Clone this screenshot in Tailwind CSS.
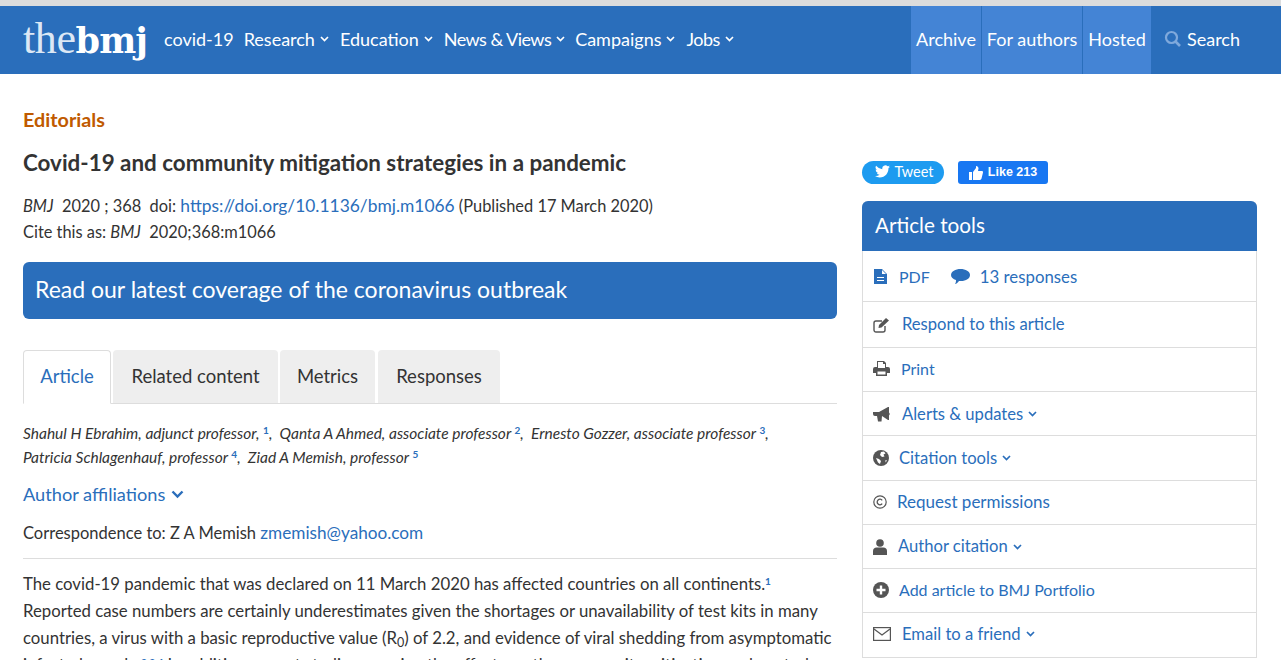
<!DOCTYPE html>
<html>
<head>
<meta charset="utf-8">
<script src="https://cdn.jsdelivr.net/npm/@tailwindcss/browser@4"></script>
</head>
<body class="bg-white h-[660px] overflow-hidden font-['Lato','Liberation_Sans',sans-serif] text-[#333]">
<div class="h-[6px] bg-[#dcdcdc]"></div>
<header class="h-[68px] bg-[#2a6ebb] flex items-center text-white text-[18px] pl-[23px]">
  <a class="w-[141px] h-[50px] leading-[50px] flex items-baseline -mt-[2px]"><span class="font-['Liberation_Serif',serif] text-[44px] tracking-[-0.4px] text-[#dce8f5]">the</span><span class="font-['DejaVu_Serif',serif] font-bold text-[35px] tracking-[-0.9px] text-white">bmj</span></a>
  <nav class="flex items-center -mt-[2px]">
    <a class="mr-[10px]">covid-19</a>
    <a class="mr-[11px] flex items-center gap-[5px]">Research <svg class="w-[9px] h-[6px]" viewBox="0 0 9 6"><path d="M1 1l3.500 3.500L8 1" fill="none" stroke="white" stroke-width="1.700"/></svg></a>
    <a class="mr-[11px] flex items-center gap-[5px]">Education <svg class="w-[9px] h-[6px]" viewBox="0 0 9 6"><path d="M1 1l3.500 3.500L8 1" fill="none" stroke="white" stroke-width="1.700"/></svg></a>
    <a class="mr-[10px] flex items-center gap-[5px] tracking-[-0.55px]">News &amp; Views <svg class="w-[9px] h-[6px]" viewBox="0 0 9 6"><path d="M1 1l3.500 3.500L8 1" fill="none" stroke="white" stroke-width="1.700"/></svg></a>
    <a class="mr-[11px] flex items-center gap-[5px]">Campaigns <svg class="w-[9px] h-[6px]" viewBox="0 0 9 6"><path d="M1 1l3.500 3.500L8 1" fill="none" stroke="white" stroke-width="1.700"/></svg></a>
    <a class="flex items-center gap-[5px] tracking-[-0.5px]">Jobs <svg class="w-[9px] h-[6px]" viewBox="0 0 9 6"><path d="M1 1l3.500 3.500L8 1" fill="none" stroke="white" stroke-width="1.700"/></svg></a>
  </nav>
  <div class="ml-auto flex items-center h-full">
    <a class="h-full w-[70px] bg-[#4484d5] flex items-center justify-center pb-[2px]">Archive</a>
    <a class="h-full w-[100px] ml-px bg-[#4484d5] flex items-center justify-center pb-[2px]">For authors</a>
    <a class="h-full w-[68px] ml-px bg-[#4484d5] flex items-center justify-center pb-[2px]">Hosted</a>
    <a class="h-full pl-[13px] w-[130px] flex items-center gap-[5px] pb-[2px]"><svg class="w-[18px] h-[18px]" viewBox="0 0 18 18"><circle cx="7.500" cy="7.500" r="5.500" fill="none" stroke="#7fa9dc" stroke-width="2.200"/><path d="M11.500 11.500L16 16" stroke="#7fa9dc" stroke-width="2.600"/></svg>Search</a>
  </div>
</header>
<main class="flex pl-[23px] pr-[24px]">
  <section class="w-[814px]">
    <div class="mt-[34px] text-[19.800px] leading-[22px] font-bold text-[#c05a00]">Editorials</div>
    <h1 class="mt-[20px] text-[22.400px] leading-[26px] font-bold text-[#333]">Covid-19 and community mitigation strategies in a pandemic</h1>
    <div class="mt-[17px] text-[16.400px] leading-[26px]">
      <p><i>BMJ</i>&nbsp; 2020 ; 368 &nbsp;doi: <a class="text-[#2a6ebb] text-[17.400px]">https://doi.org/10.1136/bmj.m1066</a> (Published 17 March 2020)</p>
      <p>Cite this as: <i>BMJ</i>&nbsp; 2020;368:m1066</p>
    </div>
    <a class="mt-[17px] flex items-center h-[57px] rounded-[6px] bg-[#2a6ebb] text-white text-[23px] pl-[12px] pb-[2px]">Read our latest coverage of the coronavirus outbreak</a>
    <div class="mt-[31px] flex items-end gap-[2px] h-[54px] border-b border-[#ddd] text-[18.500px]">
      <a class="h-[54px] w-[88px] flex items-center justify-center bg-white border border-[#ddd] border-b-white rounded-t-[4px] text-[#2a6ebb] -mb-px">Article</a>
      <a class="h-[53px] w-[165px] flex items-center justify-center bg-[#eee] rounded-t-[4px]">Related content</a>
      <a class="h-[53px] w-[95px] flex items-center justify-center bg-[#eee] rounded-t-[4px]">Metrics</a>
      <a class="h-[53px] w-[122px] ml-px flex items-center justify-center bg-[#eee] rounded-t-[4px]">Responses</a>
    </div>
    <div class="mt-[17px] text-[15.500px] leading-[24px] italic">
      <p>Shahul H Ebrahim, adjunct professor, <sup class="not-italic text-[#2a6ebb] text-[10px] font-bold">1</sup>,&nbsp; Qanta A Ahmed, associate professor <sup class="not-italic text-[#2a6ebb] text-[10px] font-bold">2</sup>,&nbsp; Ernesto Gozzer, associate professor <sup class="not-italic text-[#2a6ebb] text-[10px] font-bold">3</sup>,</p>
      <p>Patricia Schlagenhauf, professor <sup class="not-italic text-[#2a6ebb] text-[10px] font-bold">4</sup>,&nbsp; Ziad A Memish, professor <sup class="not-italic text-[#2a6ebb] text-[10px] font-bold">5</sup></p>
    </div>
    <a class="mt-[12px] flex items-center gap-[6px] text-[18.200px] leading-[26px] text-[#2a6ebb]">Author affiliations <svg class="w-[13px] h-[9px]" viewBox="0 0 13 9"><path d="M1.500 1.500l5 5 5-5" fill="none" stroke="#2a6ebb" stroke-width="2.400"/></svg></a>
    <p class="mt-[14px] text-[16.500px] leading-[24px] pb-[13px] border-b border-[#ddd]">Correspondence to: Z A Memish <a class="text-[#2a6ebb] text-[17.200px]">zmemish@yahoo.com</a></p>
    <div class="mt-[11px] text-[16.750px] leading-[27px]">
      <p>The covid-19 pandemic that was declared on 11 March 2020 has affected countries on all continents.<sup class="text-[#2a6ebb] text-[10px] font-bold">1</sup><br>Reported case numbers are certainly underestimates given the shortages or unavailability of test kits in many<br>countries, a virus with a basic reproductive value (R<sub>0</sub>) of 2.2, and evidence of viral shedding from asymptomatic<br>infected people.<sup class="text-[#2a6ebb] text-[10px] font-bold">2 3 4</sup> In addition, recent studies examine the effects on the community mitigation and control</p>
    </div>
  </section>
  <aside class="ml-[25px] w-[395px] pt-[87px]">
    <div class="flex items-center h-[23px] gap-[14px]">
      <a class="w-[82px] h-[23px] rounded-full bg-[#1d9bf0] text-white text-[14.500px] flex items-center justify-center gap-[4px] pb-[2px] pl-[3px]"><svg class="w-[15px] h-[13px]" viewBox="0 0 24 20"><path fill="white" d="M24 2.400a9.800 9.800 0 0 1-2.800.8A4.900 4.900 0 0 0 23.300.5a9.800 9.800 0 0 1-3.100 1.200 4.900 4.900 0 0 0-8.400 4.500A14 14 0 0 1 1.700.9a4.900 4.900 0 0 0 1.500 6.600 4.900 4.900 0 0 1-2.200-.6v.1a4.900 4.900 0 0 0 3.900 4.800 4.900 4.900 0 0 1-2.200.1 4.900 4.900 0 0 0 4.600 3.400A9.900 9.900 0 0 1 0 17.300 14 14 0 0 0 7.500 19.500c9.100 0 14-7.500 14-14v-.6A10 10 0 0 0 24 2.400z"/></svg>Tweet</a>
      <a class="w-[90px] h-[23px] rounded-[3px] bg-[#1877f2] text-white text-[12.500px] font-bold flex items-center justify-center gap-[5px] font-['Liberation_Sans',sans-serif]"><svg class="w-[14px] h-[14px]" viewBox="0 0 14 14"><path fill="white" d="M0 6h3v8H0zM4 6l3-4V0c1.500 0 2.500 1 2.500 2.500L9 5h4c.8 0 1.200.7 1 1.400l-1.500 6.200c-.2.8-.8 1.400-1.600 1.400H4z"/></svg>Like 213</a>
    </div>
    <div class="mt-[17px] border-x border-b border-[#ddd] rounded-t-[6px]">
      <div class="-mx-px h-[50px] bg-[#2a6ebb] rounded-t-[6px] text-white text-[20.700px] flex items-center pl-[13px]">Article tools</div>
      <div class="text-[16.600px] text-[#2a6ebb]">
        <div class="h-[51px] border-b border-[#ddd] flex items-center pl-[11px] pt-[1px]">
          <svg class="w-[13px] h-[15px] mr-[12px]" viewBox="0 0 13 15"><path fill="#2a6ebb" d="M0 0h8l5 5v10H0zM8 1v4h4zM3 8v1h7V8zM3 11v1h7v-1z" fill-rule="evenodd"/></svg><span class="text-[16px]">PDF</span>
          <svg class="ml-[21px] mr-[10px] w-[19px] h-[17px]" viewBox="0 0 19 17"><path fill="#2a6ebb" d="M9.500 1C14.500 1 19 3.500 19 7s-4 6-9 6h-2c-1 1.500-2.500 3-4 3 .7-1 1-2 1-4C2 11 0 9.500 0 7c0-3.500 4.500-6 9.500-6z"/></svg><span class="text-[16.800px]">13 responses</span>
        </div>
        <div class="h-[46px] border-b border-[#ddd] flex items-center pl-[10px]">
          <svg class="w-[18px] h-[16px] mr-[11px]" viewBox="0 0 18 16"><path d="M12 9v4a2 2 0 0 1-2 2H3a2 2 0 0 1-2-2V6a2 2 0 0 1 2-2h6" fill="none" stroke="#555" stroke-width="1.400"/><path fill="#555" d="M6 8l7-7 3 2.500-7.500 7L5.500 11z"/></svg>Respond to this article
        </div>
        <div class="h-[44px] border-b border-[#ddd] flex items-center pl-[10px] pb-[2px]">
          <svg class="w-[17px] h-[15px] mr-[11px]" viewBox="0 0 17 15"><path fill="#555" fill-rule="evenodd" d="M4 0h7l2 2v4h2a2 2 0 0 1 2 2v4h-3v3H3v-3H0V8a2 2 0 0 1 2-2h2zM5 1v6h7V3h-2V1zM4.500 10.500v3h8v-3z"/></svg><span class="text-[16px]">Print</span>
        </div>
        <div class="h-[44px] border-b border-[#ddd] flex items-center pl-[10px] pt-[1px]">
          <svg class="w-[18px] h-[15px] mr-[11px]" viewBox="0 0 18 15"><path fill="#555" d="M0 5h6l9-5h1v5.500a2 2 0 0 1 0 3V13h-1l-6-4-.5 5.500H5L4 9H2a2 2 0 0 1-2-2z"/></svg>Alerts &amp; updates <svg class="ml-[5px] w-[9px] h-[6px]" viewBox="0 0 9 6"><path d="M1 1l3.500 3.500L8 1" fill="none" stroke="#2a6ebb" stroke-width="1.700"/></svg>
        </div>
        <div class="h-[45px] border-b border-[#ddd] flex items-center pl-[10px]">
          <svg class="w-[16px] h-[16px] mr-[10px]" viewBox="0 0 16 16"><circle cx="8" cy="8" r="8" fill="#555"/><path fill="#fff" d="M8 2l3-.5 1.500 2-2 1 1 2-2.500.5L7 5zM3 8l3 1 2 2-1 3-2-1.500zM12.500 10l1.500.5-1.500 2z"/></svg>Citation tools <svg class="ml-[5px] w-[9px] h-[6px]" viewBox="0 0 9 6"><path d="M1 1l3.500 3.500L8 1" fill="none" stroke="#2a6ebb" stroke-width="1.700"/></svg>
        </div>
        <div class="h-[44px] border-b border-[#ddd] flex items-center pl-[10px] pb-[2px]">
          <svg class="w-[14px] h-[14px] mr-[10px]" viewBox="0 0 14 14"><circle cx="7" cy="7" r="6.200" fill="none" stroke="#555" stroke-width="1.200"/><path d="M9.200 5.300a2.800 2.800 0 1 0 0 3.400" fill="none" stroke="#555" stroke-width="1.300"/></svg><span class="text-[17px]">Request permissions</span>
        </div>
        <div class="h-[44px] border-b border-[#ddd] flex items-center pl-[10px]">
          <svg class="w-[14px] h-[16px] mr-[11px]" viewBox="0 0 14 16"><circle cx="7" cy="4" r="3.800" fill="#555"/><path fill="#555" d="M0 16v-4c0-2 1.500-3.500 3.500-3.500h7c2 0 3.500 1.500 3.500 3.500v4z"/></svg>Author citation <svg class="ml-[5px] w-[9px] h-[6px]" viewBox="0 0 9 6"><path d="M1 1l3.500 3.500L8 1" fill="none" stroke="#2a6ebb" stroke-width="1.700"/></svg>
        </div>
        <div class="h-[44px] border-b border-[#ddd] flex items-center pl-[10px] pb-[2px]">
          <svg class="w-[16px] h-[16px] mr-[10px]" viewBox="0 0 16 16"><circle cx="8" cy="8" r="8" fill="#555"/><path d="M8 3.500v9M3.500 8h9" stroke="#fff" stroke-width="2.400"/></svg><span class="text-[16px]">Add article to BMJ Portfolio</span>
        </div>
        <div class="h-[44px] flex items-center pl-[10px] pb-[2px]">
          <svg class="w-[18px] h-[14px] mr-[11px]" viewBox="0 0 18 14"><rect x=".6" y=".6" width="16.800" height="12.800" fill="none" stroke="#555" stroke-width="1.200"/><path d="M1 2l8 6 8-6" fill="none" stroke="#555" stroke-width="1.200"/></svg>Email to a friend <svg class="ml-[5px] w-[9px] h-[6px]" viewBox="0 0 9 6"><path d="M1 1l3.500 3.500L8 1" fill="none" stroke="#2a6ebb" stroke-width="1.700"/></svg>
        </div>
      </div>
    </div>
  </aside>
</main>
</body>
</html>
